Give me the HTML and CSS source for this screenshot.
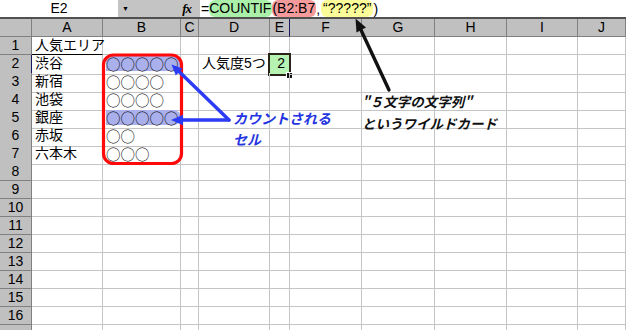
FILE: index.html
```html
<!DOCTYPE html>
<html lang="ja">
<head>
<meta charset="utf-8">
<link rel="stylesheet" href="styles.css">
</head>
<body>
<div class="app">
  <div class="fbar">
    <div class="namebox">E2</div>
    <div class="fbtns"><span class="dd">&#9660;</span><span class="fx">fx</span></div>
    <div class="formula"><span>=</span><span class="hl hl-g">COUNTIF</span><span class="hl hl-r">(B2:B7</span><span>,</span><span class="hl hl-y">“?????”</span><span>)</span></div>
  </div>
  <div class="sheet">
    <div class="row head"><div class="corner"></div><div class="ch">A</div><div class="ch">B</div><div class="ch">C</div><div class="ch">D</div><div class="ch ch-act">E</div><div class="ch">F</div><div class="ch">G</div><div class="ch">H</div><div class="ch">I</div><div class="ch">J</div></div>
    <div class="row"><div class="rh">1</div><div class="c c-under">人気エリア</div><div class="c"></div><div class="c"></div><div class="c"></div><div class="c"></div><div class="c"></div><div class="c"></div><div class="c"></div><div class="c"></div><div class="c"></div></div>
    <div class="row"><div class="rh rh-act">2</div><div class="c">渋谷</div><div class="c"><span class="maru pill">○○○○○</span></div><div class="c"></div><div class="c">人気度5つ</div><div class="c sel">2</div><div class="c"></div><div class="c"></div><div class="c"></div><div class="c"></div><div class="c"></div></div>
    <div class="row"><div class="rh">3</div><div class="c">新宿</div><div class="c"><span class="maru">○○○○</span></div><div class="c"></div><div class="c"></div><div class="c"></div><div class="c"></div><div class="c"></div><div class="c"></div><div class="c"></div><div class="c"></div></div>
    <div class="row"><div class="rh">4</div><div class="c">池袋</div><div class="c"><span class="maru">○○○○</span></div><div class="c"></div><div class="c"></div><div class="c"></div><div class="c"></div><div class="c"></div><div class="c"></div><div class="c"></div><div class="c"></div></div>
    <div class="row"><div class="rh">5</div><div class="c">銀座</div><div class="c"><span class="maru pill">○○○○○</span></div><div class="c"></div><div class="c"></div><div class="c"></div><div class="c"></div><div class="c"></div><div class="c"></div><div class="c"></div><div class="c"></div></div>
    <div class="row"><div class="rh">6</div><div class="c">赤坂</div><div class="c"><span class="maru">○○</span></div><div class="c"></div><div class="c"></div><div class="c"></div><div class="c"></div><div class="c"></div><div class="c"></div><div class="c"></div><div class="c"></div></div>
    <div class="row"><div class="rh">7</div><div class="c">六本木</div><div class="c"><span class="maru">○○○</span></div><div class="c"></div><div class="c"></div><div class="c"></div><div class="c"></div><div class="c"></div><div class="c"></div><div class="c"></div><div class="c"></div></div>
    <div class="row"><div class="rh">8</div><div class="c"></div><div class="c"></div><div class="c"></div><div class="c"></div><div class="c"></div><div class="c"></div><div class="c"></div><div class="c"></div><div class="c"></div><div class="c"></div></div>
    <div class="row"><div class="rh">9</div><div class="c"></div><div class="c"></div><div class="c"></div><div class="c"></div><div class="c"></div><div class="c"></div><div class="c"></div><div class="c"></div><div class="c"></div><div class="c"></div></div>
    <div class="row"><div class="rh">10</div><div class="c"></div><div class="c"></div><div class="c"></div><div class="c"></div><div class="c"></div><div class="c"></div><div class="c"></div><div class="c"></div><div class="c"></div><div class="c"></div></div>
    <div class="row"><div class="rh">11</div><div class="c"></div><div class="c"></div><div class="c"></div><div class="c"></div><div class="c"></div><div class="c"></div><div class="c"></div><div class="c"></div><div class="c"></div><div class="c"></div></div>
    <div class="row"><div class="rh">12</div><div class="c"></div><div class="c"></div><div class="c"></div><div class="c"></div><div class="c"></div><div class="c"></div><div class="c"></div><div class="c"></div><div class="c"></div><div class="c"></div></div>
    <div class="row"><div class="rh">13</div><div class="c"></div><div class="c"></div><div class="c"></div><div class="c"></div><div class="c"></div><div class="c"></div><div class="c"></div><div class="c"></div><div class="c"></div><div class="c"></div></div>
    <div class="row"><div class="rh">14</div><div class="c"></div><div class="c"></div><div class="c"></div><div class="c"></div><div class="c"></div><div class="c"></div><div class="c"></div><div class="c"></div><div class="c"></div><div class="c"></div></div>
    <div class="row"><div class="rh">15</div><div class="c"></div><div class="c"></div><div class="c"></div><div class="c"></div><div class="c"></div><div class="c"></div><div class="c"></div><div class="c"></div><div class="c"></div><div class="c"></div></div>
    <div class="row"><div class="rh">16</div><div class="c"></div><div class="c"></div><div class="c"></div><div class="c"></div><div class="c"></div><div class="c"></div><div class="c"></div><div class="c"></div><div class="c"></div><div class="c"></div></div>
    <div class="row"><div class="rh"></div><div class="c"></div><div class="c"></div><div class="c"></div><div class="c"></div><div class="c"></div><div class="c"></div><div class="c"></div><div class="c"></div><div class="c"></div><div class="c"></div></div>
  </div>
  <svg class="overlay" width="626" height="330" viewBox="0 0 626 330">
    <rect x="103.5" y="55" width="78" height="108.5" rx="10" ry="10" fill="none" stroke="#ff0a0a" stroke-width="3.2"/>
    <g stroke="#2c3cf4" stroke-width="3.4" fill="none" stroke-linecap="round">
      <line x1="229" y1="120" x2="179" y2="71.5"/>
      <line x1="229" y1="120" x2="182" y2="120"/>
    </g>
    <g fill="#2c3cf4">
      <polygon points="171.5,64.5 182.6,68.4 175.8,75.4"/>
      <polygon points="171,120 183,114.8 183,125.2"/>
    </g>
    <line x1="389" y1="90" x2="361" y2="30" stroke="#111" stroke-width="3.4" stroke-linecap="round"/>
    <polygon points="355.5,18.5 366,27.5 356.5,32.5" fill="#111"/>
  </svg>
  <div class="note note-blue">カウントされる<br>セル</div>
  <div class="note note-black">"５文字の文字列"<br>というワイルドカード</div>
</div>
</body>
</html>
```

FILE: styles.css
```css
* { box-sizing: border-box; }
html, body { margin: 0; padding: 0; background: #fff; }
body { font-family: "Liberation Sans", "Noto Sans CJK JP", sans-serif; font-size: 14px; color: #000; }

.app { position: relative; width: 626px; height: 330px; overflow: hidden; background: #fff; }

.fbar { display: flex; height: 19px; border-bottom: 2px solid #505050; }
.namebox { width: 118px; text-align: center; line-height: 17px; background: #fff; }
.fbtns { width: 82px; background: #c4c4c4; display: flex; align-items: center; justify-content: space-between; padding: 0 9px 0 4px; }
.dd { font-size: 7px; line-height: 7px; }
.fx { font-family: "Liberation Serif", serif; font-style: italic; font-size: 13px; font-weight: bold; letter-spacing: -1px; }
.formula { flex: 1; display: flex; align-items: center; padding-left: 1px; line-height: 16px; height: 17px; }
.hl { border-radius: 6px; height: 17px; line-height: 17px; }
.hl-g { background: #aaf0a8; padding-right: 1px; }
.hl-r { background: #f49a9a; padding-right: 1px; }
.hl-y { background: #fcfc98; padding: 0 2px; margin-left: 1px; }

.sheet { display: flex; flex-direction: column; }
.row { display: grid; grid-template-columns: 32px 71px 78px 18px 71px 20px 72px 73px 72px 71px 1fr; height: 18px; }

.corner, .ch, .rh { background: #c0c0c0; border-right: 1px solid #808080; border-bottom: 1px solid #808080; }
.ch { text-align: center; line-height: 17px; }
.ch-act { border-right: 1px solid #1a1a60; }
.rh { text-align: center; line-height: 17px; }
.rh-act { border-right: 1px solid #1a1a60; }

.c { border-right: 1px solid #c4c4c4; border-bottom: 1px solid #c4c4c4; line-height: 17px; padding-left: 3px; white-space: nowrap; overflow: visible; position: relative; }
.c-under { border-bottom: 1px solid #000; }

.maru { font-family: "Noto Sans CJK JP", sans-serif; font-size: 14.5px; font-weight: 300; letter-spacing: 0; display: inline-block; height: 15px; line-height: 15px; margin-top: 1px; }
.pill { background: #aab0ec; border-radius: 0 8px 8px 0; padding-right: 2px; }

.sel { text-align: right; padding-right: 4px; background: #b6f2b2; }
.sel::before { content: ""; position: absolute; left: -2px; top: -2px; right: -2px; bottom: -2px; border: 2.5px solid #2a2418; }
.sel::after { content: ""; position: absolute; right: -4px; bottom: -5px; width: 5px; height: 5px; background: #111; border: 1px solid #fff; }

.overlay { position: absolute; left: 0; top: 0; pointer-events: none; }

.note { position: absolute; font-family: "Noto Sans CJK JP", sans-serif; font-weight: bold; font-style: italic; white-space: nowrap; }
.note-blue { left: 233px; top: 108px; color: #2434e0; font-size: 14px; line-height: 21px; }
.note-black { left: 362px; top: 90px; color: #111; font-size: 13.5px; line-height: 22px; }
```
